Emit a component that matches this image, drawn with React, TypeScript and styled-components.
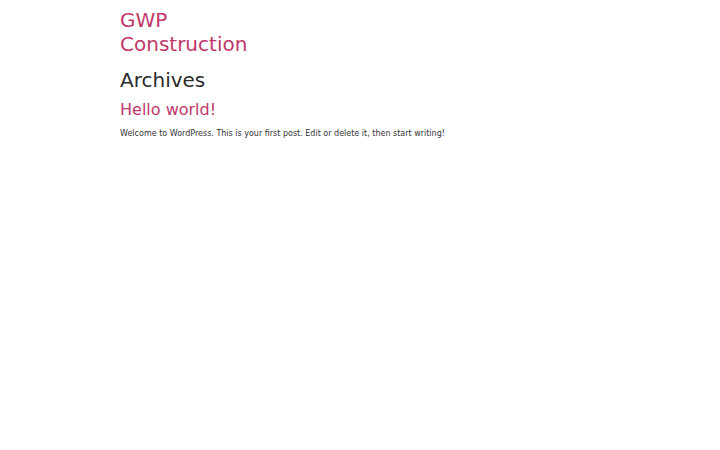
import styled, { createGlobalStyle } from 'styled-components';

const GlobalStyle = createGlobalStyle`
  html, body {
    margin: 0;
    padding: 0;
    background: #fff;
    font-family: "DejaVu Sans", sans-serif;
  }
`;

const Page = styled.div`
  max-width: 480px;
  margin: 0 auto;
  padding-top: 8px;
`;

const SiteTitle = styled.a`
  display: block;
  font-size: 20px;
  line-height: 24px;
  color: #c0396b;
  text-decoration: none;
  width: 140px;
`;

const PageTitle = styled.h1`
  margin: 10px 0 0;
  font-size: 20px;
  line-height: 28px;
  font-weight: normal;
  color: #2b2b2b;
`;

const PostTitle = styled.h2`
  margin: 5px 0 0;
  font-size: 16px;
  line-height: 22px;
  font-weight: normal;
  color: #c0396b;
`;

const Excerpt = styled.p`
  margin: 7px 0 0;
  font-size: 8px;
  line-height: 12px;
  color: #333;
`;

export default function App() {
  return (
    <>
      <GlobalStyle />
      <Page>
        <SiteTitle href="#">GWP Construction</SiteTitle>
        <PageTitle>Archives</PageTitle>
        <PostTitle>Hello world!</PostTitle>
        <Excerpt>
          Welcome to WordPress. This is your first post. Edit or delete it, then start writing!
        </Excerpt>
      </Page>
    </>
  );
}
